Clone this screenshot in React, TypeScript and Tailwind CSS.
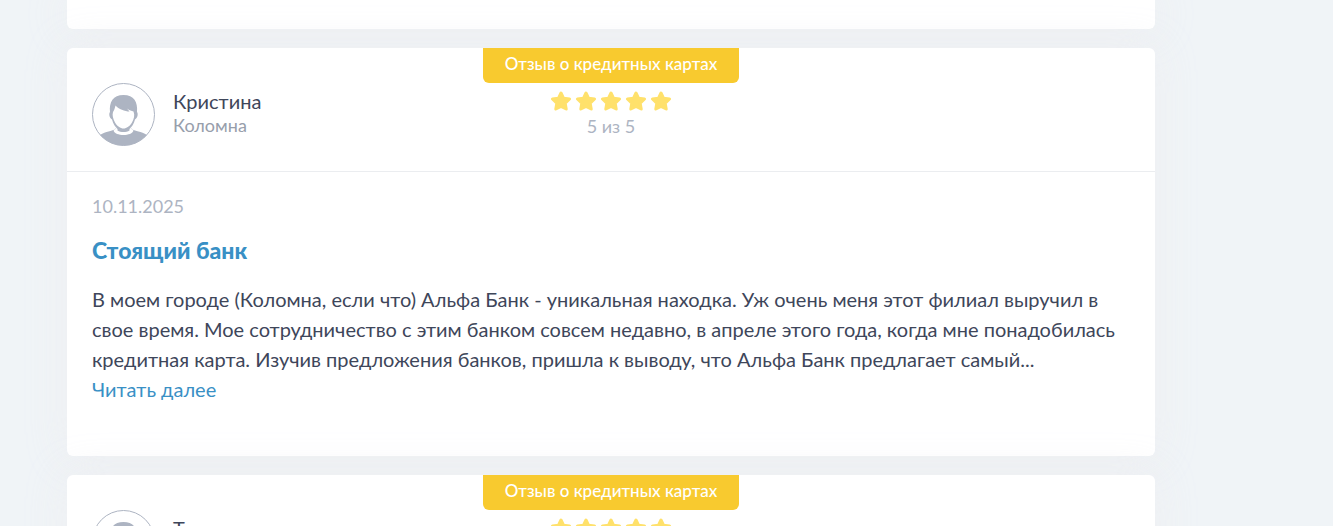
import React from 'react';

interface Review {
  name: string;
  city: string;
  category: string;
  rating: number;
  date: string;
  title: string;
  text: string;
}

const reviews: Review[] = [
  {
    name: 'Кристина',
    city: 'Коломна',
    category: 'Отзыв о кредитных картах',
    rating: 5,
    date: '10.11.2025',
    title: 'Стоящий банк',
    text: 'В моем городе (Коломна, если что) Альфа Банк - уникальная находка. Уж очень меня этот филиал выручил в свое время. Мое сотрудничество с этим банком совсем недавно, в апреле этого года, когда мне понадобилась кредитная карта. Изучив предложения банков, пришла к выводу, что Альфа Банк предлагает самый...',
  },
  {
    name: 'Татьяна',
    city: 'Москва',
    category: 'Отзыв о кредитных картах',
    rating: 5,
    date: '09.11.2025',
    title: 'Хороший банк',
    text: 'Пользуюсь кредитной картой этого банка.',
  },
];

const Avatar: React.FC = () => (
  <svg viewBox="0 0 63 63" className="size-[63px] shrink-0" aria-hidden="true">
    <clipPath id="avatar-circle">
      <circle cx="31.5" cy="31.5" r="31" />
    </clipPath>
    <g clipPath="url(#avatar-circle)" fill="#adb4c2">
      {/* Shoulders */}
      <path d="M4 63V55.500C9 50 16 48.500 20 47.500C22 47 23 46.500 23.500 45.500H39.500C40 46.500 41 47 43 47.500C47 48.500 54 50 59 55.500V63Z" />
      <path d="M21.500 47.500C23 53.500 40 53.500 41.500 47.500L38.500 45H24.500Z" fill="#fff" />
      {/* Head and hair */}
      <path d="M18 29C17 19 21 12 31.500 12C42 12 46 19 45 29C46.500 31 45.500 35 43 36.500C42 41 39.500 44 37.500 46V47.500C34 49.500 29 49.500 25.500 47.500V46C23.500 44 21 41 20 36.500C17.500 35 16.500 31 18 29Z" />
      {/* Face */}
      <path d="M21 29C22 27.500 23 25 23.500 22.500C26.500 26 33 28.500 37.500 28.500L35 25.500C37.500 27.500 39.500 28 41.500 28.500C43 32 42 36 40 39.500C38 43 34.500 45.500 31.500 45.500C28.500 45.500 25 43 23 39.500C21 36 20 32 21 29Z" fill="#fff" />
    </g>
    <circle cx="31.5" cy="31.5" r="31" fill="none" stroke="#adb4c2" />
  </svg>
);

const Star: React.FC = () => (
  <svg viewBox="0 0 22 20" className="h-5 w-[22px]" aria-hidden="true">
    <path
      d="M11 2L13.500 7.200L19.500 8L15.200 12.200L16.200 18L11 15.400L5.800 18L6.800 12.200L2.500 8L8.500 7.200Z"
      fill="#ffe16b"
      stroke="#ffe16b"
      strokeWidth="3"
      strokeLinejoin="round"
    />
  </svg>
);

const ReviewCard: React.FC<{ review: Review }> = ({ review }) => (
  <article className="rounded-md bg-white shadow-[0_0_40px_rgba(237,237,240,0.8)]">
    <header className="grid grid-cols-[1fr_auto_1fr] border-b border-[#ebedf0] pb-[25px]">
      <div className="flex gap-[18px] pt-[35px] pl-[25px]">
        <Avatar />
        <div className="pt-[6px]">
          <div className="text-xl leading-6 text-[#3e465a]">{review.name}</div>
          <div className="text-lg leading-6 text-[#979eab]">{review.city}</div>
        </div>
      </div>
      <div className="flex flex-col items-center">
        <div className="h-[35px] rounded-b-md bg-[#f8ca2f] px-[22px] text-[17px] leading-8 font-medium text-white">
          {review.category}
        </div>
        <div className="mt-2 flex gap-[3px]">
          {Array.from({ length: review.rating }, (_, i) => (
            <Star key={i} />
          ))}
        </div>
        <div className="mt-[3px] text-lg leading-6 text-[#adb4c2]">{review.rating} из 5</div>
      </div>
    </header>

    <div className="px-[25px] pt-[22px] pb-[52px]">
      <time className="block text-lg leading-6 text-[#adb4c2]">{review.date}</time>
      <h2 className="mt-[17px] text-[23px] leading-[30px] font-black text-[#3990c5]">{review.title}</h2>
      <p className="mt-[19px] text-xl leading-[30px] text-[#3e465a]">{review.text}</p>
      <a href="#" className="text-xl leading-[30px] text-[#3990c5]">
        Читать далее
      </a>
    </div>
  </article>
);

const App: React.FC = () => {
  return (
    <main className="h-screen overflow-hidden bg-[#f0f4f7] pr-[178px] pl-[67px] font-['Lato','Open_Sans',sans-serif]">
      <div className="flex flex-col gap-[19px]">
        {/* End of the previous review */}
        <div className="h-[29px] rounded-b-md bg-white shadow-[0_0_40px_rgba(237,237,240,0.8)]" />
        {reviews.map((review) => (
          <ReviewCard key={review.name} review={review} />
        ))}
      </div>
    </main>
  );
};

export default App;
